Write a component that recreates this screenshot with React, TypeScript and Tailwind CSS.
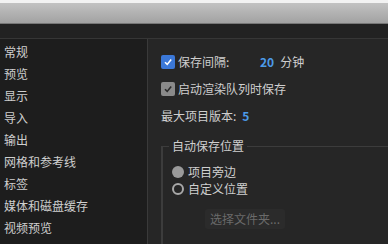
import React from "react";

const menu = ["常规", "预览", "显示", "导入", "输出", "网格和参考线", "标签", "媒体和磁盘缓存", "视频预览"];

function Check({ blue }: { blue?: boolean }) {
  return (
    <span
      className={`flex h-[14px] w-[14px] items-center justify-center rounded-[2px] ${
        blue ? "bg-[#3b78d8]" : "bg-[#8a8a8a]"
      }`}
    >
      <svg width="10" height="10" viewBox="0 0 10 10">
        <path d="M2 5.2 L4.2 7.4 L8.2 2.6" fill="none" stroke={blue ? "#fff" : "#2a2a2a"} strokeWidth="1.6" />
      </svg>
    </span>
  );
}

export default function App() {
  return (
    <div
      className="flex h-[244px] w-[388px] flex-col overflow-hidden bg-[#262626] text-[12px] text-[#cfcfcf]"
      style={{ fontFamily: '"Noto Sans CJK SC", "Noto Sans", sans-serif' }}
    >
      {/* title bar */}
      <div className="h-[3px] bg-[#f2f2f2]" />
      <div className="h-[21px] border-b border-[#777] bg-gradient-to-b from-[#c2c2c2] to-[#a2a2a2]" />
      <div className="h-[15px] border-b border-[#363636] bg-[#222]" />

      <div className="flex flex-1">
        {/* sidebar */}
        <div className="flex w-[148px] flex-col border-r border-[#3a3a3a] bg-[#1d1d1d] pl-[4px] pt-[2px]">
          {menu.map((m) => (
            <div key={m} className="h-[22px] leading-[22px]">
              {m}
            </div>
          ))}
        </div>

        {/* content */}
        <div className="flex flex-1 flex-col pl-[13px] pt-[15px]">
          <div className="flex h-[16px] items-center">
            <Check blue />
            <span className="ml-[3px] w-[82px]">保存间隔:</span>
            <span className="font-bold text-[#4c9be8]">20</span>
            <span className="ml-[6px]">分钟</span>
          </div>
          <div className="mt-[11px] flex h-[16px] items-center">
            <Check />
            <span className="ml-[3px]">启动渲染队列时保存</span>
          </div>
          <div className="mt-[11px] flex h-[16px] items-center">
            <span>最大项目版本:</span>
            <span className="ml-[6px] font-bold text-[#4c9be8]">5</span>
          </div>

          {/* group box */}
          <div className="relative mt-[22px] flex-1 border-l-2 border-t border-[#3c3c3c] pl-[6px]">
            <span className="absolute -top-[10px] left-[6px] bg-[#262626] px-[3px] leading-[18px]">自动保存位置</span>
            <div className="flex flex-col pl-[3px] pt-[16px]">
              <div className="flex h-[17px] items-center">
                <span className="h-[12px] w-[12px] rounded-full bg-[#9a9a9a]" />
                <span className="ml-[4px]">项目旁边</span>
              </div>
              <div className="flex h-[17px] items-center">
                <span className="h-[12px] w-[12px] rounded-full border-2 border-[#a8a8a8]" />
                <span className="ml-[4px]">自定义位置</span>
              </div>
              <div className="ml-[33px] mt-[12px] flex h-[20px] w-[80px] items-center rounded-[3px] bg-[#2b2b2b] pl-[5px] text-[#6a6a6a]">
                选择文件夹...
              </div>
            </div>
          </div>
        </div>
      </div>
    </div>
  );
}
